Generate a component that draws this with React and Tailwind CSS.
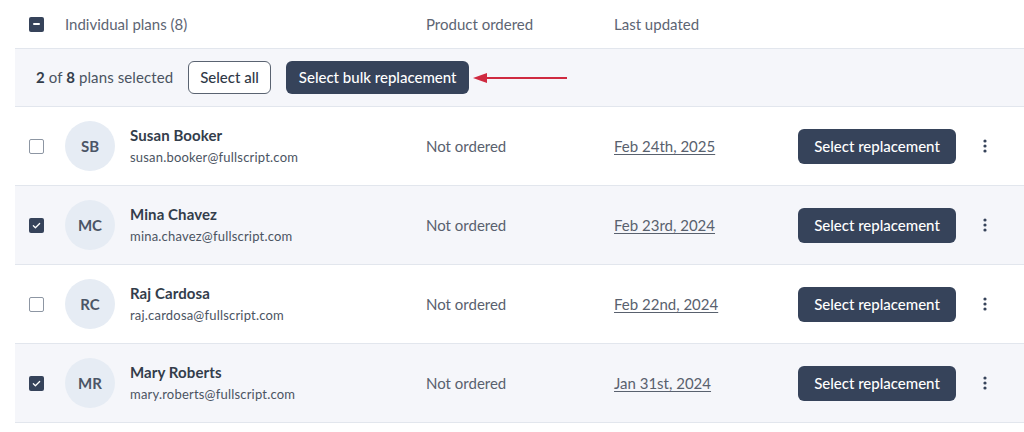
import React from 'react';

const font = { fontFamily: 'Lato, "Noto Sans", sans-serif' };

const plans = [
  { initials: 'SB', name: 'Susan Booker', email: 'susan.booker@fullscript.com', date: 'Feb 24th, 2025', checked: false },
  { initials: 'MC', name: 'Mina Chavez', email: 'mina.chavez@fullscript.com', date: 'Feb 23rd, 2024', checked: true },
  { initials: 'RC', name: 'Raj Cardosa', email: 'raj.cardosa@fullscript.com', date: 'Feb 22nd, 2024', checked: false },
  { initials: 'MR', name: 'Mary Roberts', email: 'mary.roberts@fullscript.com', date: 'Jan 31st, 2024', checked: true },
];

const Checkbox = ({ state }) => {
  if (state === 'checked') {
    return (
      <span className="flex h-[15px] w-[15px] items-center justify-center rounded-[2px] bg-[#36435a]">
        <svg width="9" height="9" viewBox="0 0 10 10" fill="none">
          <path d="M1.5 5.2l2.3 2.3L8.5 2.8" stroke="#fff" strokeWidth="1.4" strokeLinecap="round" strokeLinejoin="round" />
        </svg>
      </span>
    );
  }
  if (state === 'indeterminate') {
    return (
      <span className="flex h-[15px] w-[15px] items-center justify-center rounded-[2px] bg-[#36435a]">
        <span className="h-[2px] w-[7px] rounded bg-white" />
      </span>
    );
  }
  return <span className="block h-[15px] w-[15px] rounded-[2px] border border-[#8d96a3] bg-white" />;
};

const Kebab = () => (
  <svg width="4" height="14" viewBox="0 0 4 14" fill="#36435a">
    <circle cx="2" cy="2" r="1.6" />
    <circle cx="2" cy="7" r="1.6" />
    <circle cx="2" cy="12" r="1.6" />
  </svg>
);

const App = () => {
  return (
    <div className="h-[432px] w-[1024px] overflow-hidden bg-white pl-[15px]" style={font}>
      {/* header */}
      <div className="flex h-[49px] items-center border-b border-[#e2e6ed] text-[15px] text-[#5d6573]">
        <div className="w-[50px] pl-[14px]"><Checkbox state="indeterminate" /></div>
        <div className="w-[361px]">Individual plans (8)</div>
        <div className="w-[188px]">Product ordered</div>
        <div>Last updated</div>
      </div>

      {/* bulk toolbar */}
      <div className="flex h-[58px] items-center border-b border-[#e2e6ed] bg-[#f5f6fa] pl-[21px] text-[15px]">
        <span className="tracking-[0.1px] text-[#4a5361]">
          <b className="font-bold text-[#333d4b]">2</b> of <b className="font-bold text-[#333d4b]">8</b> plans selected
        </span>
        <button className="ml-[15px] h-[33px] rounded-md border border-[#5a6371] bg-white px-[11px] font-medium text-[#2f3846]">
          Select all
        </button>
        <button className="ml-[15px] h-[33px] rounded-md bg-[#36435a] px-[13px] font-medium text-white">
          Select bulk replacement
        </button>
        <svg className="ml-[4px]" width="96" height="12" viewBox="0 0 96 12">
          <path d="M12 6H94" stroke="#cf2a40" strokeWidth="2" />
          <path d="M0 6L14 1v10z" fill="#cf2a40" />
        </svg>
      </div>

      {/* rows */}
      {plans.map((p) => (
        <div
          key={p.initials}
          className={`flex h-[79px] items-center border-b border-[#e2e6ed] ${p.checked ? 'bg-[#f5f6fa]' : 'bg-white'}`}
        >
          <div className="w-[50px] pl-[14px]"><Checkbox state={p.checked ? 'checked' : 'unchecked'} /></div>
          <div className="flex h-[50px] w-[50px] items-center justify-center rounded-full bg-[#e6ecf4] text-[15px] font-bold text-[#4b5566]">
            {p.initials}
          </div>
          <div className="ml-[15px] w-[296px]">
            <p className="text-[15px] font-bold leading-5 tracking-[0.1px] text-[#333d4b]">{p.name}</p>
            <p className="mt-[2px] text-[13px] leading-5 tracking-[0.2px] text-[#4b5462]">{p.email}</p>
          </div>
          <div className="w-[188px] text-[15px] text-[#59616e]">Not ordered</div>
          <div className="w-[184px]">
            <a className="text-[15px] text-[#59616e] underline underline-offset-2">{p.date}</a>
          </div>
          <button className="h-[35px] w-[158px] rounded-md bg-[#36435a] text-[15px] font-medium text-white">
            Select replacement
          </button>
          <div className="ml-[27px]"><Kebab /></div>
        </div>
      ))}
    </div>
  );
};

export default App;
